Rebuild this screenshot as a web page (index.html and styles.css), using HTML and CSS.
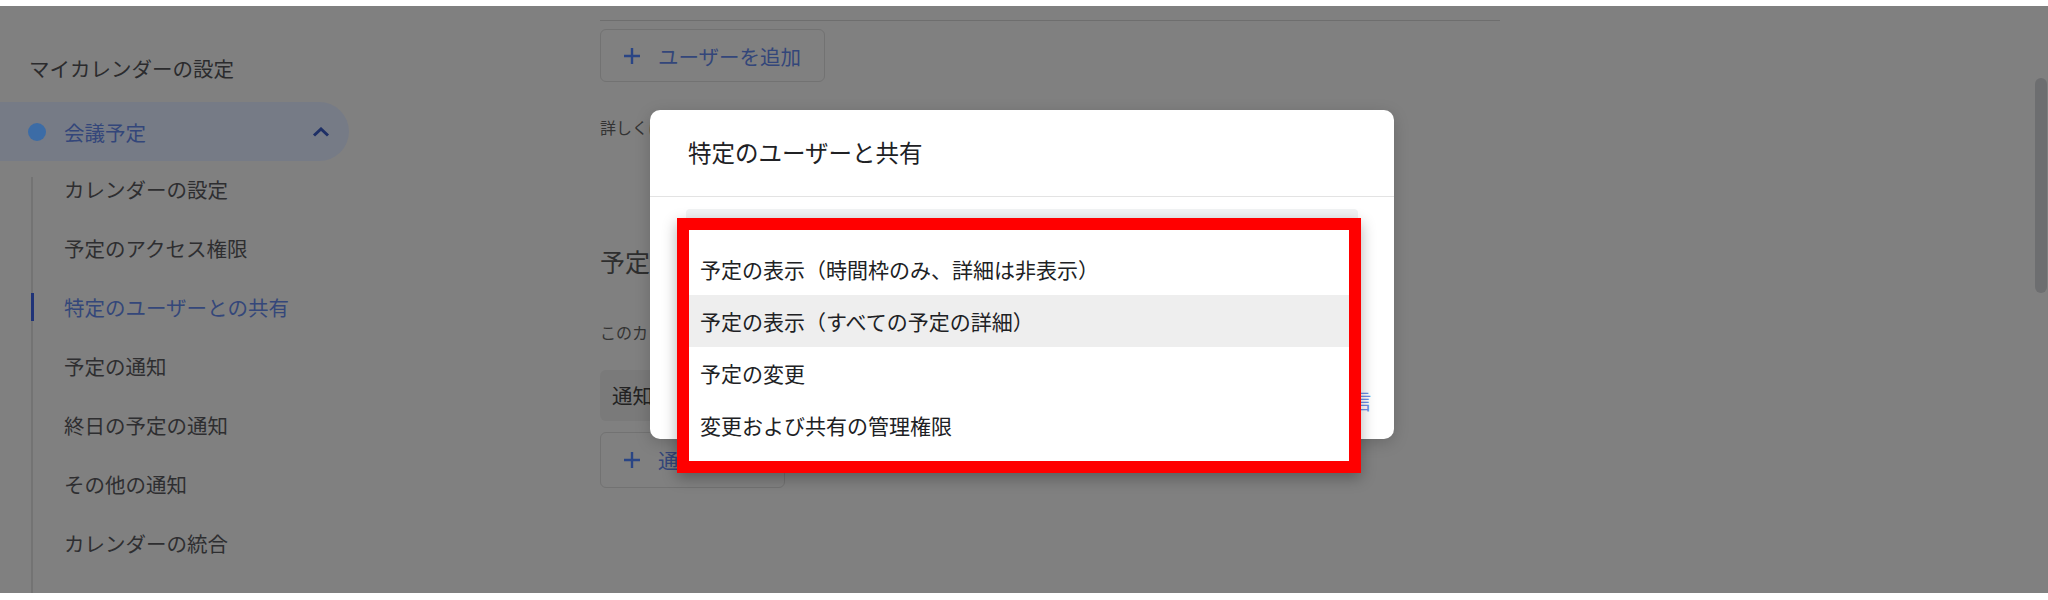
FILE: index.html
```html
<!DOCTYPE html>
<html lang="ja">
<head>
  <meta charset="UTF-8">
  <title>特定のユーザーと共有</title>
  <meta name="viewport" content="width=device-width, initial-scale=1.0">
  <link rel="stylesheet" href="styles.css">
</head>
<body>
  <div class="screen">
    <aside class="sidebar">
      <div class="side-title">マイカレンダーの設定</div>
      <div class="cal-pill">
        <span class="cal-dot"></span>
        <span class="cal-name">会議予定</span>
        <svg class="chev" width="18" height="10" viewBox="0 0 18 10"><path d="M2 8.5 L9 2 L16 8.5" fill="none" stroke="#1e2f66" stroke-width="3"/></svg>
      </div>
      <ul class="side-list">
        <li>カレンダーの設定</li>
        <li>予定のアクセス権限</li>
        <li class="active">特定のユーザーとの共有</li>
        <li>予定の通知</li>
        <li>終日の予定の通知</li>
        <li>その他の通知</li>
        <li>カレンダーの統合</li>
      </ul>
    </aside>

    <main class="content">
      <div class="rule"></div>
      <button class="outline-btn add-user">
        <svg width="18" height="18" viewBox="0 0 18 18"><path d="M9 1 V17 M1 9 H17" stroke="#2a4585" stroke-width="2.4"/></svg>
        ユーザーを追加
      </button>
      <p class="hint">詳しくは、ヘルプセンターをご覧ください</p>
      <h2 class="section-title">予定の通知</h2>
      <p class="desc">このカレンダーの予定の通知</p>
      <div class="notify-row">通知</div>
      <button class="outline-btn add-notify">
        <svg width="18" height="18" viewBox="0 0 18 18"><path d="M9 1 V17 M1 9 H17" stroke="#2a4585" stroke-width="2.4"/></svg>
        通知を追加
      </button>
    </main>

    <div class="scrollbar"></div>

    <div class="dialog">
      <div class="dialog-head">特定のユーザーと共有</div>
      <div class="dialog-body">
        <div class="select-field"></div>
        <div class="dialog-actions">
          <span class="text-btn">送信</span>
        </div>
      </div>
    </div>

    <ul class="menu">
      <li>予定の表示（時間枠のみ、詳細は非表示）</li>
      <li class="hover">予定の表示（すべての予定の詳細）</li>
      <li>予定の変更</li>
      <li>変更および共有の管理権限</li>
    </ul>
  </div>
</body>
</html>
```

FILE: styles.css
```css
body {
  margin: 0;
  background: #fff;
  font-family: "Noto Sans CJK JP", "Noto Sans", sans-serif;
}
.screen {
  position: relative;
  margin-top: 6px;
  height: 587px;
  background: #808080;
  overflow: hidden;
  display: flex;
}

/* sidebar */
.sidebar {
  width: 600px;
  flex-shrink: 0;
}
.side-title {
  padding: 47px 0 0 29px;
  font-size: 20.5px;
  line-height: 30px;
  color: #2b2b2d;
}
.cal-pill {
  margin-top: 19px;
  width: 349px;
  height: 59px;
  box-sizing: border-box;
  display: flex;
  align-items: center;
  padding: 0 19px 0 28px;
  background: #767b86;
  border-radius: 0 30px 30px 0;
}
.cal-dot {
  width: 18px;
  height: 18px;
  border-radius: 50%;
  background: #3c6ca6;
}
.cal-name {
  margin-left: 18px;
  font-size: 20.5px;
  color: #33467a;
  flex: 1;
}
.side-list {
  position: relative;
  list-style: none;
  margin: -1px 0 0 31px;
  padding: 0;
}
.side-list::before {
  content: "";
  position: absolute;
  left: 0;
  top: 17px;
  bottom: -80px;
  width: 2px;
  background: #737373;
}
.side-list li {
  position: relative;
  height: 59px;
  line-height: 59px;
  padding-left: 33px;
  font-size: 20.5px;
  color: #2e2e30;
}
.side-list li.active {
  color: #34477a;
}
.side-list li.active::before {
  content: "";
  position: absolute;
  left: 0;
  top: 15px;
  width: 3px;
  height: 28px;
  background: #1f3378;
}

/* main content behind the dialog */
.content {
  padding-top: 14px;
  width: 900px;
}
.rule {
  height: 1px;
  background: #6e6e6e;
}
.outline-btn {
  display: flex;
  align-items: center;
  gap: 17px;
  box-sizing: border-box;
  padding: 0 23px 0 22px;
  border: 1px solid #727272;
  border-radius: 6px;
  background: transparent;
  font-family: inherit;
  font-size: 20.5px;
  color: #33467a;
  white-space: nowrap;
}
.add-user {
  margin-top: 8px;
  height: 53px;
}
.add-notify {
  margin-top: 11px;
  height: 56px;
}
.hint {
  margin: 33px 0 0;
  font-size: 16px;
  line-height: 24px;
  color: #333;
}
.section-title {
  margin: 104px 0 0;
  font-size: 25px;
  line-height: 36px;
  font-weight: normal;
  color: #2e2e2e;
}
.desc {
  margin: 41px 0 0;
  font-size: 16px;
  line-height: 24px;
  color: #333;
}
.notify-row {
  margin-top: 26px;
  width: 600px;
  height: 51px;
  line-height: 51px;
  padding-left: 12px;
  box-sizing: border-box;
  background: #7a7a7a;
  border-radius: 6px;
  font-size: 20.5px;
  color: #222;
}

.scrollbar {
  position: absolute;
  right: 1px;
  top: 72px;
  width: 12px;
  height: 215px;
  border-radius: 6px;
  background: #6d6e70;
}

/* dialog */
.dialog {
  position: absolute;
  left: 650px;
  top: 104px;
  width: 744px;
  height: 329px;
  display: flex;
  flex-direction: column;
  background: #fff;
  border-radius: 10px;
  box-shadow: 0 4px 16px rgba(0,0,0,0.18);
}
.dialog-head {
  padding: 25px 38px 27px;
  font-size: 23.5px;
  line-height: 34px;
  color: #202124;
  border-bottom: 1px solid #e3e3e3;
}
.dialog-body {
  flex: 1;
  display: flex;
  flex-direction: column;
  padding: 12px 36px 10px;
}
.select-field {
  height: 56px;
  background: #f1f3f4;
  border-radius: 4px 4px 0 0;
}
.dialog-actions {
  margin-top: auto;
  height: 58px;
  display: flex;
  align-items: center;
  justify-content: flex-end;
  margin-right: -13px;
}
.text-btn {
  font-size: 21px;
  color: #6d8fe6;
}

/* dropdown menu, outlined in red */
.menu {
  position: absolute;
  left: 677px;
  top: 212px;
  width: 684px;
  box-sizing: border-box;
  margin: 0;
  padding: 13px 0 10px;
  list-style: none;
  background: #fff;
  border: 12px solid #ff0000;
  box-shadow: 0 5px 14px rgba(0,0,0,0.3);
}
.menu li {
  height: 52px;
  line-height: 52px;
  padding-left: 11px;
  font-size: 21px;
  color: #202124;
}
.menu li.hover {
  background: #eeeeee;
}
```
